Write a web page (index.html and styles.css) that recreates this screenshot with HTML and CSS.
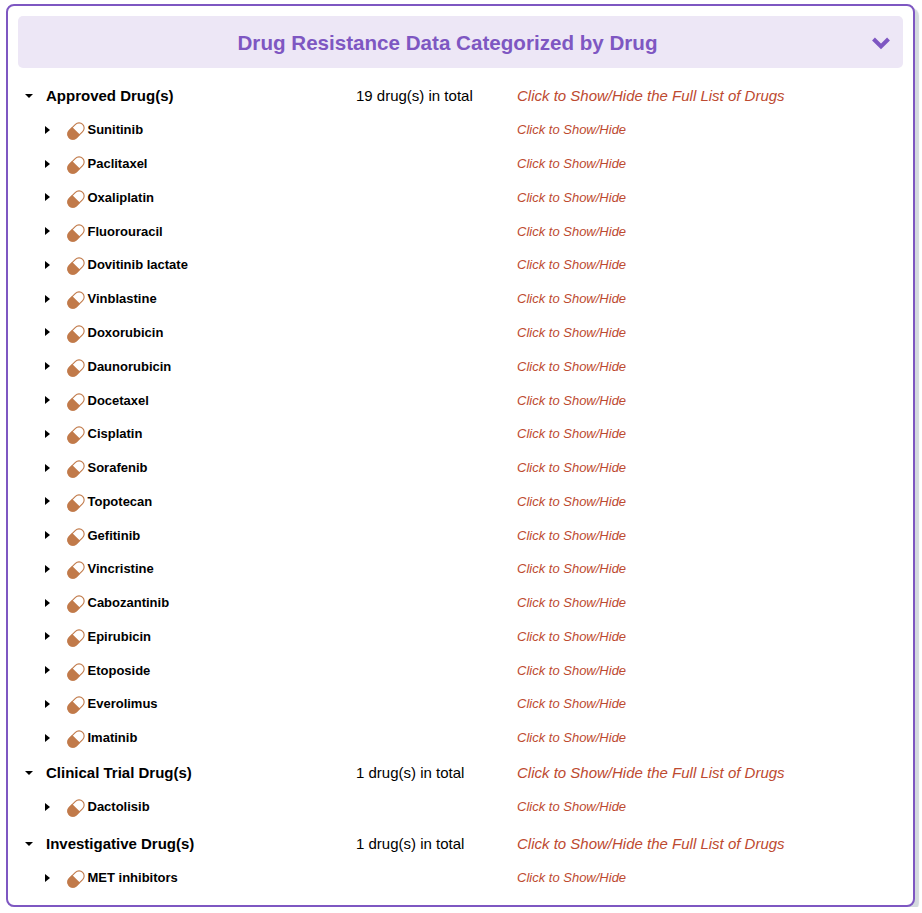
FILE: index.html
```html
<!DOCTYPE html>
<html lang="en">
<head>
    <meta charset="UTF-8">
    <title>Drug Resistance Data</title>
    <link rel="stylesheet" href="styles.css">
</head>
<body>
    <svg class="defs" width="0" height="0">
        <symbol id="pill" viewBox="0 0 18 18">
            <g transform="rotate(-45 9 9)">
                <rect x="-0.4" y="3.9" width="18.8" height="10.2" rx="5.1" fill="#fff" stroke="#c17a4a" stroke-width="1.1"/>
                <path d="M9.2 3.4H4.5a5.6 5.6 0 0 0 0 11.2H9.2z" fill="#c17a4a"/>
            </g>
        </symbol>
    </svg>
    <div class="panel">
        <div class="panel-header">
            <h1>Drug Resistance Data Categorized by Drug</h1>
            <svg class="chevron" viewBox="0 0 20 14"><path d="M2.5 3l7.5 7.5L17.5 3" fill="none" stroke="#7e57c2" stroke-width="4"/></svg>
        </div>

        <div class="group-row">
            <span class="caret-down"></span>
            <span class="group-name">Approved Drug(s)</span>
            <span class="total">19 drug(s) in total</span>
            <span class="toggle-all">Click to Show/Hide the Full List of Drugs</span>
        </div>
        <div class="drug-row"><span class="caret-right"></span><svg class="pill"><use href="#pill"/></svg><span class="drug-name">Sunitinib</span><span class="toggle">Click to Show/Hide</span></div>
        <div class="drug-row"><span class="caret-right"></span><svg class="pill"><use href="#pill"/></svg><span class="drug-name">Paclitaxel</span><span class="toggle">Click to Show/Hide</span></div>
        <div class="drug-row"><span class="caret-right"></span><svg class="pill"><use href="#pill"/></svg><span class="drug-name">Oxaliplatin</span><span class="toggle">Click to Show/Hide</span></div>
        <div class="drug-row"><span class="caret-right"></span><svg class="pill"><use href="#pill"/></svg><span class="drug-name">Fluorouracil</span><span class="toggle">Click to Show/Hide</span></div>
        <div class="drug-row"><span class="caret-right"></span><svg class="pill"><use href="#pill"/></svg><span class="drug-name">Dovitinib lactate</span><span class="toggle">Click to Show/Hide</span></div>
        <div class="drug-row"><span class="caret-right"></span><svg class="pill"><use href="#pill"/></svg><span class="drug-name">Vinblastine</span><span class="toggle">Click to Show/Hide</span></div>
        <div class="drug-row"><span class="caret-right"></span><svg class="pill"><use href="#pill"/></svg><span class="drug-name">Doxorubicin</span><span class="toggle">Click to Show/Hide</span></div>
        <div class="drug-row"><span class="caret-right"></span><svg class="pill"><use href="#pill"/></svg><span class="drug-name">Daunorubicin</span><span class="toggle">Click to Show/Hide</span></div>
        <div class="drug-row"><span class="caret-right"></span><svg class="pill"><use href="#pill"/></svg><span class="drug-name">Docetaxel</span><span class="toggle">Click to Show/Hide</span></div>
        <div class="drug-row"><span class="caret-right"></span><svg class="pill"><use href="#pill"/></svg><span class="drug-name">Cisplatin</span><span class="toggle">Click to Show/Hide</span></div>
        <div class="drug-row"><span class="caret-right"></span><svg class="pill"><use href="#pill"/></svg><span class="drug-name">Sorafenib</span><span class="toggle">Click to Show/Hide</span></div>
        <div class="drug-row"><span class="caret-right"></span><svg class="pill"><use href="#pill"/></svg><span class="drug-name">Topotecan</span><span class="toggle">Click to Show/Hide</span></div>
        <div class="drug-row"><span class="caret-right"></span><svg class="pill"><use href="#pill"/></svg><span class="drug-name">Gefitinib</span><span class="toggle">Click to Show/Hide</span></div>
        <div class="drug-row"><span class="caret-right"></span><svg class="pill"><use href="#pill"/></svg><span class="drug-name">Vincristine</span><span class="toggle">Click to Show/Hide</span></div>
        <div class="drug-row"><span class="caret-right"></span><svg class="pill"><use href="#pill"/></svg><span class="drug-name">Cabozantinib</span><span class="toggle">Click to Show/Hide</span></div>
        <div class="drug-row"><span class="caret-right"></span><svg class="pill"><use href="#pill"/></svg><span class="drug-name">Epirubicin</span><span class="toggle">Click to Show/Hide</span></div>
        <div class="drug-row"><span class="caret-right"></span><svg class="pill"><use href="#pill"/></svg><span class="drug-name">Etoposide</span><span class="toggle">Click to Show/Hide</span></div>
        <div class="drug-row"><span class="caret-right"></span><svg class="pill"><use href="#pill"/></svg><span class="drug-name">Everolimus</span><span class="toggle">Click to Show/Hide</span></div>
        <div class="drug-row"><span class="caret-right"></span><svg class="pill"><use href="#pill"/></svg><span class="drug-name">Imatinib</span><span class="toggle">Click to Show/Hide</span></div>

        <div class="group-row">
            <span class="caret-down"></span>
            <span class="group-name">Clinical Trial Drug(s)</span>
            <span class="total">1 drug(s) in total</span>
            <span class="toggle-all">Click to Show/Hide the Full List of Drugs</span>
        </div>
        <div class="drug-row"><span class="caret-right"></span><svg class="pill"><use href="#pill"/></svg><span class="drug-name">Dactolisib</span><span class="toggle">Click to Show/Hide</span></div>

        <div class="group-row group-last">
            <span class="caret-down"></span>
            <span class="group-name">Investigative Drug(s)</span>
            <span class="total">1 drug(s) in total</span>
            <span class="toggle-all">Click to Show/Hide the Full List of Drugs</span>
        </div>
        <div class="drug-row"><span class="caret-right"></span><svg class="pill"><use href="#pill"/></svg><span class="drug-name">MET inhibitors</span><span class="toggle">Click to Show/Hide</span></div>
    </div>
</body>
</html>
```

FILE: styles.css
```css
body {
    font-family: "Liberation Sans", Arial, sans-serif;
    margin: 0;
    padding: 4px 6px 0 6px;
    background-color: #fff;
    color: #000;
}
.defs {
    position: absolute;
}
.panel {
    box-sizing: border-box;
    width: 909px;
    height: 903px;
    padding: 10px 10px 0 10px;
    background-color: #fff;
    border: 2px solid #7e57c2;
    border-radius: 8px;
    box-shadow: 4px 4px 1px #d3dade;
}
.panel-header {
    height: 52px;
    display: flex;
    align-items: center;
    justify-content: center;
    padding-right: 26px;
    position: relative;
    background-color: #ede7f6;
    border-radius: 5px;
    margin-bottom: 11px;
}
h1 {
    margin: 2px 0 0 0;
    font-size: 20.6px;
    font-weight: bold;
    color: #7e57c2;
}
.chevron {
    position: absolute;
    right: 12px;
    top: 20px;
    width: 20px;
    height: 14px;
}
.group-row {
    display: flex;
    align-items: center;
    height: 34px;
    font-size: 15px;
    line-height: 34px;
}
.drug-row + .group-row {
    margin-top: 1.5px;
}
.drug-row + .group-last {
    margin-top: 3px;
}
.caret-down {
    width: 0;
    height: 0;
    margin-left: 7px;
    margin-right: 13px;
    border-left: 4px solid transparent;
    border-right: 4px solid transparent;
    border-top: 4px solid #000;
}
.group-name {
    width: 310px;
    font-weight: bold;
}
.total {
    width: 161px;
}
.toggle-all {
    font-style: italic;
    color: #bd4a30;
}
.drug-row {
    display: flex;
    align-items: center;
    height: 33.78px;
    font-size: 13px;
}
.caret-right {
    width: 0;
    height: 0;
    margin-left: 27px;
    margin-right: 16.5px;
    border-top: 4px solid transparent;
    border-bottom: 4px solid transparent;
    border-left: 5px solid #000;
}
.pill {
    width: 18px;
    height: 18px;
    margin-right: 3px;
    position: relative;
    top: 1.5px;
}
.drug-name {
    width: 429.5px;
    font-weight: bold;
}
.toggle {
    font-style: italic;
    color: #bd4a30;
}
```
